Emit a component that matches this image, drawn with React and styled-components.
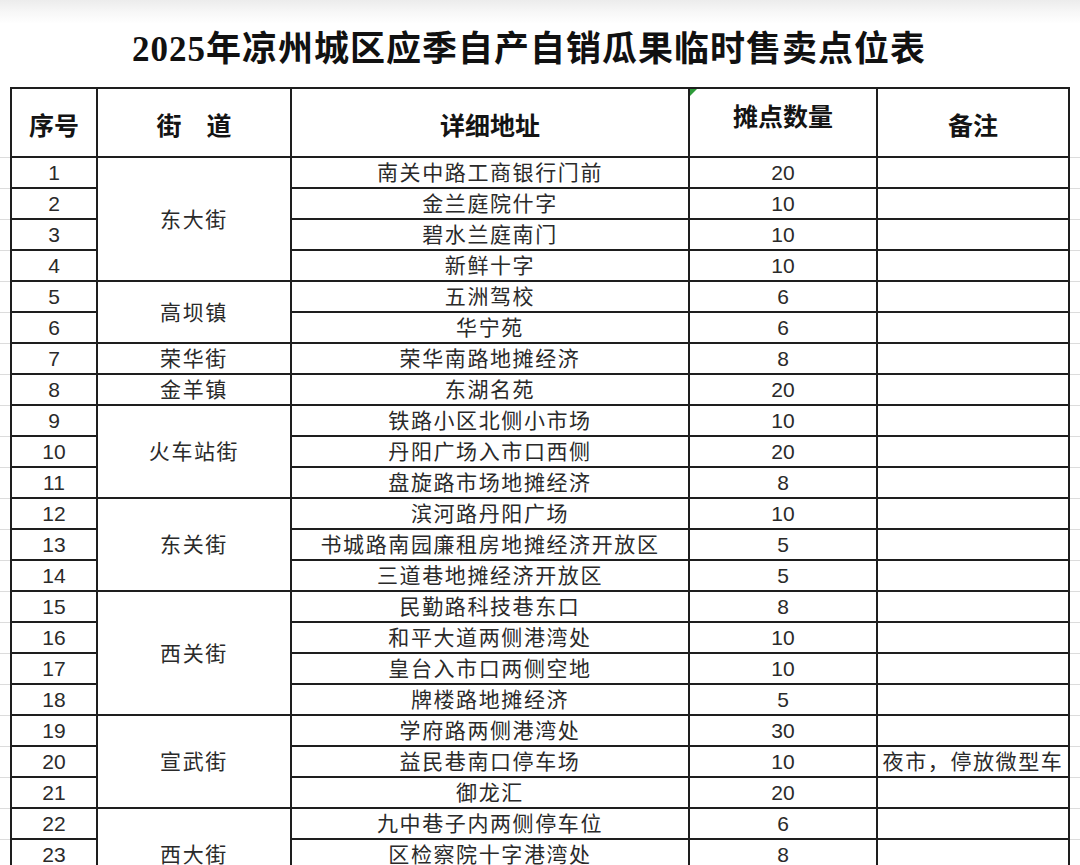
import React from 'react';
import styled, { createGlobalStyle } from 'styled-components';

const GlobalStyle = createGlobalStyle`
  html, body {
    margin: 0;
    padding: 0;
    background: #ffffff;
    height: 865px;
    overflow: hidden;
  }
  body {
    font-family: "Liberation Sans", "Noto Sans CJK SC", sans-serif;
    color: #2a2a2a;
  }
`;

const Page = styled.div`
  width: 1080px;
  display: flex;
  flex-direction: column;
`;

const TitleBar = styled.div`
  height: 87px;
  display: flex;
  align-items: center;
  justify-content: center;
  padding-right: 22px;
  box-sizing: border-box;
  background: linear-gradient(180deg, #ececec 0px, #f7f7f7 12px, #ffffff 24px);
`;

const Title = styled.h1`
  margin: 0;
  padding-top: 4px;
  font-family: "Liberation Serif", "Noto Sans CJK SC", serif;
  font-size: 35px;
  font-weight: 700;
  color: #111;
  letter-spacing: 1px;
`;

const Sheet = styled.table`
  width: 1080px;
  border-collapse: collapse;
  table-layout: fixed;
`;

const Gutter = styled.td`
  padding: 0;
  border: none;
  border-bottom: 1px solid #dcdcdc;
`;

const HeadCell = styled.th`
  position: relative;
  box-sizing: border-box;
  height: ${p => (p.$top ? '67px' : '69px')};
  padding: 0;
  padding-top: ${p => (p.$top ? '8px' : '2px')};
  border: 2px solid #1e1e1e;
  font-family: "Noto Sans CJK SC", sans-serif;
  font-size: 25px;
  font-weight: 700;
  color: #141414;
  text-align: center;
  vertical-align: ${p => (p.$top ? 'top' : 'middle')};
  white-space: pre;
`;

const Flag = styled.span`
  position: absolute;
  left: 0;
  top: 0;
  width: 0;
  height: 0;
  border-top: 7px solid #2e9b3a;
  border-right: 7px solid transparent;
`;

const Row = styled.tr`
  height: 31px;
`;

const Cell = styled.td`
  padding: 0;
  border: 2px solid #1e1e1e;
  font-size: 21px;
  line-height: 27px;
  letter-spacing: ${p => (p.$num ? '0' : '1.6px')};
  color: #2a2a2a;
  text-align: center;
  vertical-align: middle;
  white-space: nowrap;
  overflow: hidden;
`;

const rows = [
  { n: 1, street: '东大街', span: 4, addr: '南关中路工商银行门前', count: 20 },
  { n: 2, addr: '金兰庭院什字', count: 10 },
  { n: 3, addr: '碧水兰庭南门', count: 10 },
  { n: 4, addr: '新鲜十字', count: 10 },
  { n: 5, street: '高坝镇', span: 2, addr: '五洲驾校', count: 6 },
  { n: 6, addr: '华宁苑', count: 6 },
  { n: 7, street: '荣华街', span: 1, addr: '荣华南路地摊经济', count: 8 },
  { n: 8, street: '金羊镇', span: 1, addr: '东湖名苑', count: 20 },
  { n: 9, street: '火车站街', span: 3, addr: '铁路小区北侧小市场', count: 10 },
  { n: 10, addr: '丹阳广场入市口西侧', count: 20 },
  { n: 11, addr: '盘旋路市场地摊经济', count: 8 },
  { n: 12, street: '东关街', span: 3, addr: '滨河路丹阳广场', count: 10 },
  { n: 13, addr: '书城路南园廉租房地摊经济开放区', count: 5 },
  { n: 14, addr: '三道巷地摊经济开放区', count: 5 },
  { n: 15, street: '西关街', span: 4, addr: '民勤路科技巷东口', count: 8 },
  { n: 16, addr: '和平大道两侧港湾处', count: 10 },
  { n: 17, addr: '皇台入市口两侧空地', count: 10 },
  { n: 18, addr: '牌楼路地摊经济', count: 5 },
  { n: 19, street: '宣武街', span: 3, addr: '学府路两侧港湾处', count: 30 },
  { n: 20, addr: '益民巷南口停车场', count: 10, note: '夜市，停放微型车' },
  { n: 21, addr: '御龙汇', count: 20 },
  { n: 22, street: '西大街', span: 3, addr: '九中巷子内两侧停车位', count: 6 },
  { n: 23, addr: '区检察院十字港湾处', count: 8 },
  // continues below the visible area
  { n: '', addr: '', count: '' },
];

const App = () => {
  return (
    <Page>
      <GlobalStyle />
      <TitleBar>
        <Title>2025年凉州城区应季自产自销瓜果临时售卖点位表</Title>
      </TitleBar>
      <Sheet>
        <colgroup>
          <col style={{ width: 11 }} />
          <col style={{ width: 86 }} />
          <col style={{ width: 194 }} />
          <col style={{ width: 398 }} />
          <col style={{ width: 188 }} />
          <col style={{ width: 192 }} />
          <col style={{ width: 11 }} />
        </colgroup>
        <thead>
          <tr>
            <Gutter />
            <HeadCell>序号</HeadCell>
            <HeadCell>街　道</HeadCell>
            <HeadCell>详细地址</HeadCell>
            <HeadCell $top>
              <Flag />
              摊点数量
            </HeadCell>
            <HeadCell>备注</HeadCell>
            <Gutter />
          </tr>
        </thead>
        <tbody>
          {rows.map((r, i) => (
            <Row key={i}>
              <Gutter />
              <Cell $num>{r.n}</Cell>
              {r.street && <Cell rowSpan={r.span}>{r.street}</Cell>}
              <Cell>{r.addr}</Cell>
              <Cell $num>{r.count}</Cell>
              <Cell>{r.note || ''}</Cell>
              <Gutter />
            </Row>
          ))}
        </tbody>
      </Sheet>
    </Page>
  );
};

export default App;
